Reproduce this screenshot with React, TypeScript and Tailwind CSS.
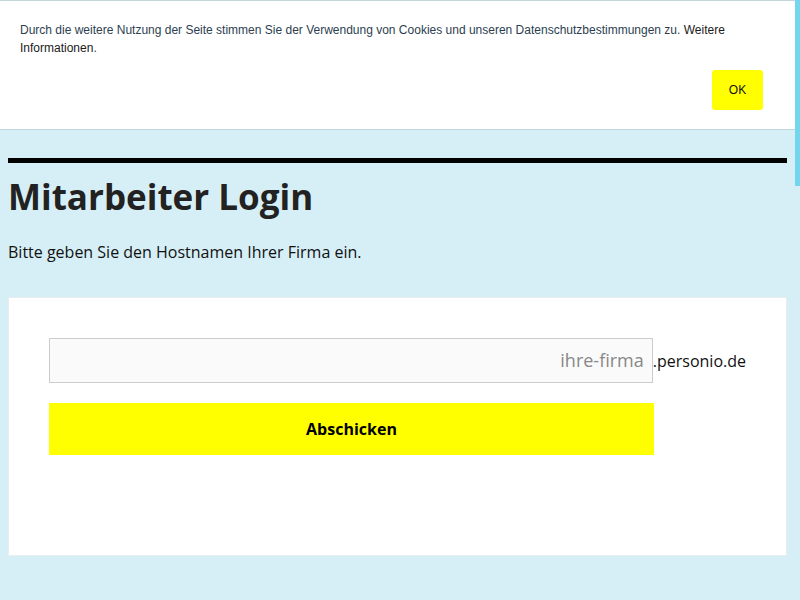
export default function App() {
  return (
    <div className="relative min-h-[600px] w-[800px] overflow-hidden bg-[#d6eff6]" style={{ fontFamily: '"Open Sans", sans-serif' }}>
      <div className="w-[795px]">
        {/* Cookie banner */}
        <div className="h-[130px] border-y border-[#c5d5dd] bg-white px-5 pt-[20px]" style={{ fontFamily: '"Liberation Sans", Arial, sans-serif' }}>
          <p className="text-[12px] leading-[18px] text-[#2c3e50]">
            Durch die weitere Nutzung der Seite stimmen Sie der Verwendung von Cookies und unseren Datenschutzbestimmungen zu.{' '}
            <span className="text-[#1a1a1a]">Weitere Informationen</span>.
          </p>
          <div className="mt-[13px] flex justify-end pr-[12px]">
            <button className="h-[40px] w-[51px] rounded-[3px] bg-[#ffff00] text-[12px] text-[#111]">OK</button>
          </div>
        </div>

        <div className="px-2 pt-[28px]">
          <div className="h-[5px] bg-black" />
          <h1 className="mt-[10px] text-[35px] font-bold leading-[48px] text-[#222]">Mitarbeiter Login</h1>
          <p className="mt-[19px] text-[16px] leading-[24px] text-[#111]">Bitte geben Sie den Hostnamen Ihrer Firma ein.</p>

          <div className="mt-[33px] h-[259px] border border-[#e6eef0] bg-white px-[40px] pt-[40px]">
            <div className="flex items-center">
              <div className="flex h-[45px] w-[605px] items-center justify-end border border-[#cccccc] bg-[#fafafa] px-[8px] text-[18px] text-[#888]">
                ihre-firma
              </div>
              <span className="text-[16px] text-[#111]">.personio.de</span>
            </div>
            <button className="mt-[20px] h-[52px] w-[605px] bg-[#ffff00] text-[16px] font-bold text-black">Abschicken</button>
          </div>
        </div>
      </div>

      {/* scrollbar thumb */}
      <div className="absolute right-0 top-0 h-[186px] w-[5px] bg-[#72d6ef]" />
    </div>
  );
}
